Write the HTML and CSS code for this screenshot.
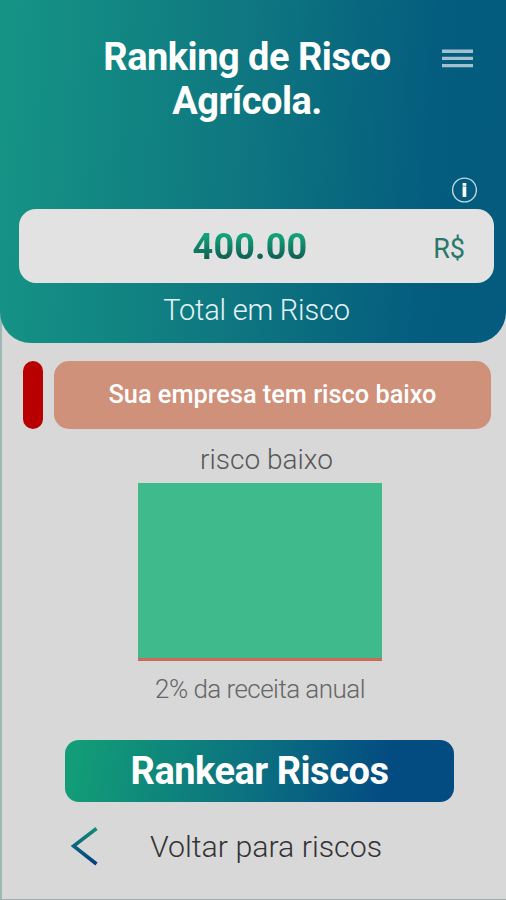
FILE: index.html
```html
<!DOCTYPE html>
<html lang="pt-BR">
<head>
    <meta charset="UTF-8">
    <meta name="viewport" content="width=device-width, initial-scale=1.0">
    <title>Ranking de Risco Agrícola</title>
    <link rel="stylesheet" href="styles.css">
</head>
<body>
    <div class="container">
        <header>
            <div class="title-bar">
                <h1>Ranking de Risco<br>Agrícola.</h1>
                <button class="menu-button" aria-label="Menu">
                    <svg viewBox="0 0 31 19">
                        <path d="M0 2.2h31M0 9.4h31M0 16.6h31" stroke="#a1c0d0" stroke-width="3.4"/>
                    </svg>
                </button>
            </div>
            <div class="info-row">
                <svg class="info-icon" viewBox="0 0 26 26">
                    <circle cx="13.5" cy="13" r="11.9" fill="none" stroke="#c3d5df" stroke-width="1.4"/>
                    <rect x="11.6" y="6" width="3.7" height="2.8" fill="#fff"/>
                    <rect x="11.6" y="9.4" width="3.7" height="10.5" fill="#fff"/>
                </svg>
            </div>
            <div class="total-box">
                <span class="total-value">400.00</span>
                <span class="total-currency">R$</span>
            </div>
            <p class="total-label">Total em Risco</p>
        </header>
        <main>
            <div class="risk-alert">
                <div class="risk-level"></div>
                <div class="risk-message">Sua empresa tem risco baixo</div>
            </div>
            <div class="risk-chart">
                <p class="chart-title">risco baixo</p>
                <div class="chart-bar"></div>
                <p class="chart-label">2% da receita anual</p>
            </div>
            <button class="rank-button">Rankear Riscos</button>
            <a href="#" class="back-link">
                <svg class="back-icon" viewBox="0 0 28 42">
                    <defs>
                        <linearGradient id="backGradient" x1="0" y1="0" x2="0" y2="1">
                            <stop offset="0" stop-color="#0f8d78"/>
                            <stop offset="1" stop-color="#033c80"/>
                        </linearGradient>
                    </defs>
                    <path d="M25.5 2.5 L2.5 20 L25.5 38" fill="none" stroke="url(#backGradient)" stroke-width="3.6"/>
                </svg>
                <span>Voltar para riscos</span>
            </a>
        </main>
    </div>
</body>
</html>
```
FILE: styles.css
```css
/* Estilos gerais */
* {
    box-sizing: border-box;
}

body {
    font-family: Roboto, 'Liberation Sans', sans-serif;
    margin: 0;
    background-color: #d8d8d8;
}

p,
h1 {
    margin: 0;
}

button {
    border: none;
    padding: 0;
    font-family: inherit;
    cursor: pointer;
}

.container {
    height: 900px;
    overflow: hidden;
    background: linear-gradient(#9bbab3, #9bbab3) left / 2px 100% no-repeat;
    border-bottom: 1px solid #a3abab;
}

/* Cabeçalho */
header {
    height: 343px;
    padding: 35px 12px 0 19px;
    background: linear-gradient(94deg, #159385 3%, #0e7580 50%, #045d7e 83%, #045b7d);
    border-radius: 0 0 31px 31px;
}

.title-bar {
    display: flex;
    justify-content: flex-end;
    height: 142px;
    padding-right: 21px;
}

h1 {
    width: 288px;
    margin-right: 51px;
    color: #fff;
    font-size: 38px;
    font-weight: bold;
    letter-spacing: -0.5px;
    line-height: 44px;
    text-align: center;
    white-space: nowrap;
}

.menu-button {
    width: 31px;
    height: 19px;
    margin-top: 14px;
    background: none;
}

.menu-button svg {
    display: block;
}

.info-row {
    display: flex;
    justify-content: flex-end;
    height: 32px;
    padding-right: 17px;
}

.info-icon {
    width: 26px;
    height: 26px;
}

.total-box {
    display: grid;
    grid-template-columns: 1fr auto 1fr;
    align-items: center;
    height: 74px;
    padding: 0 29px 0 16px;
    background-color: #e2e2e2;
    border-radius: 17px;
}

.total-value {
    grid-column: 2;
    padding-top: 1px;
    font-size: 36px;
    font-weight: bold;
    letter-spacing: 0.2px;
    background: linear-gradient(#12a17a 25%, #11574f 85%);
    -webkit-background-clip: text;
    background-clip: text;
    color: transparent;
}

.total-currency {
    margin-top: 6px;
    color: #28786c;
    font-size: 27px;
    text-align: right;
}

.total-label {
    padding-top: 10px;
    color: #e4f3f8;
    font-size: 29px;
    font-weight: 300;
    letter-spacing: -0.2px;
    line-height: 34px;
    text-align: center;
}

/* Aviso de risco */
.risk-alert {
    display: flex;
    gap: 11px;
    height: 86px;
    padding: 18px 15px 0 23px;
}

.risk-level {
    width: 20px;
    background-color: #b90000;
    border-radius: 10px;
}

.risk-message {
    flex: 1;
    color: #fff;
    background-color: #d0917b;
    border-radius: 15px;
    font-size: 25.3px;
    font-weight: 500;
    line-height: 67px;
    text-align: center;
}

/* Gráfico */
.risk-chart {
    display: flex;
    flex-direction: column;
    align-items: center;
    padding-left: 14px;
}

.chart-title {
    padding: 14px 0 0 13px;
    color: #585858;
    font-size: 28px;
    font-weight: 300;
    line-height: 34px;
}

.chart-bar {
    width: 244px;
    height: 178px;
    margin-top: 6px;
    background-color: #3fba8c;
    border-bottom: 3px solid #cc6a59;
}

.chart-label {
    padding-top: 12px;
    color: #666;
    font-size: 26px;
    font-weight: 300;
    letter-spacing: -0.55px;
    line-height: 32px;
}

/* Botões */
.rank-button {
    display: block;
    width: 389px;
    height: 62px;
    margin: 35px 0 0 65px;
    color: #fff;
    background: linear-gradient(100deg, #129c77 4%, #0b6f80 50%, #034c82 82%);
    border-radius: 14px;
    font-size: 38px;
    font-weight: bold;
    letter-spacing: -0.5px;
}

.back-link {
    display: flex;
    gap: 51px;
    padding: 24px 0 0 71px;
    color: #333;
    font-size: 30.3px;
    font-weight: 300;
    line-height: 42px;
    text-decoration: none;
}

.back-icon {
    width: 28px;
    height: 42px;
}
```
